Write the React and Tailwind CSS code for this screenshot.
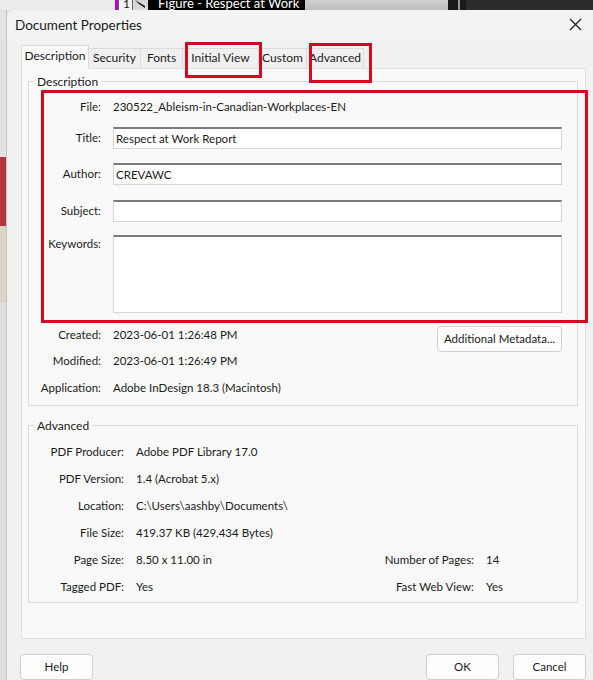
import React from 'react';

const FONT = { fontFamily: 'Lato, "Open Sans", "Liberation Sans", sans-serif' };

const TABS = [
  { label: 'Description', w: 'w-[68px]', active: true },
  { label: 'Security', w: 'w-[52px]' },
  { label: 'Fonts', w: 'w-[42px]' },
  { label: 'Initial View', w: 'w-[76px]' },
  { label: 'Custom', w: 'w-[48px]' },
  { label: 'Advanced', w: 'w-[57px]' },
];

const ADVANCED = [
  ['PDF Producer:', 'Adobe PDF Library 17.0'],
  ['PDF Version:', '1.4 (Acrobat 5.x)'],
  ['Location:', 'C:\\Users\\aashby\\Documents\\'],
  ['File Size:', '419.37 KB (429,434 Bytes)'],
  ['Page Size:', '8.50 x 11.00 in', 'Number of Pages:', '14'],
  ['Tagged PDF:', 'Yes', 'Fast Web View:', 'Yes'],
];

function Field({ value, tall }) {
  return (
    <div
      className={`bg-white border border-[#d6d6d6] border-t-2 border-t-[#7c7c7c] px-[2px] flex ${
        tall ? 'h-[78px] items-start' : 'h-[22px] items-center'
      }`}
    >
      {value}
    </div>
  );
}

function Btn({ children, className = '' }) {
  return (
    <button
      className={`h-[26px] rounded-[4px] bg-[#fdfdfd] border border-[#d0d0d0] text-[11.5px] text-[#1b1b1b] ${className}`}
    >
      {children}
    </button>
  );
}

export default function App() {
  return (
    <div className="w-[593px] h-[680px] overflow-hidden relative bg-[#e4e4e4] text-[#1b1b1b]" style={FONT}>
      {/* app behind the dialog */}
      <div className="flex h-[10px] overflow-hidden">
        <div className="w-[115px] bg-[#ececec]" />
        <div className="w-[3px] bg-[#c000c8]" />
        <div className="w-[15px] bg-[#f4f4f4] border-x border-[#666] text-[12px] leading-[8px] pl-[4px]">1</div>
        <div className="w-[15px] bg-[#d8d8d8] flex items-start">
          <svg width="12" height="8" viewBox="0 0 12 8">
            <path d="M2 0L12 6L12 8L6 4Z" fill="#111" />
          </svg>
        </div>
        <div className="w-[157px] bg-black text-white text-[13px] leading-[7px] pl-[10px] whitespace-nowrap">
          Figure - Respect at Work
        </div>
        <div className="w-[143px] bg-gradient-to-b from-[#d0d0d0] to-[#bdbdbd]" />
        <div className="w-[10px] bg-[#1a1a1a]" />
        <div className="w-[2px] bg-[#9a9a9a]" />
        <div className="w-[6px] bg-[#1a1a1a]" />
        <div className="flex-1 bg-[#2c2c2c]" />
      </div>

      <div className="flex h-[670px]">
        {/* left sliver of document */}
        <div className="w-[7px] flex flex-col border-r border-[#c4c4c4]">
          <div className="h-[147px] bg-[#e2e2e2]" />
          <div className="h-[69px] bg-[#b3363f]" />
          <div className="h-[77px] bg-[#dcd5c4]" />
          <div className="flex-1 bg-[#dedede]" />
        </div>

        {/* dialog */}
        <div className="flex-1 bg-[#f1f1f1] rounded-tl-[8px] flex flex-col">
          <div className="h-[30px] flex items-center justify-between pl-[8px] pr-[11px] bg-[#f3f3f3] rounded-tl-[8px]">
            <span className="text-[13.5px]">Document Properties</span>
            <svg width="13" height="13" viewBox="0 0 13 13">
              <path d="M1 1L12 12M12 1L1 12" stroke="#1b1b1b" strokeWidth="1.2" />
            </svg>
          </div>

          {/* tabs */}
          <div className="flex items-end h-[28px] pl-[14px]">
            {TABS.map((t) => (
              <div
                key={t.label}
                className={`${t.w} flex items-center justify-center text-[12px] border-[#dcdcdc] ${
                  t.active
                    ? 'h-[24px] pb-[2px] bg-[#f9f9f9] border-x border-t -mb-px relative z-10'
                    : 'h-[20px] pb-[1px] bg-[#f0f0f0] border-r border-t'
                }`}
              >
                {t.label}
              </div>
            ))}
          </div>

          {/* panel */}
          <div className="ml-[14px] mr-[7px] h-[573px] bg-[#f9f9f9] border border-[#dedede] px-[6px] pt-[5px] text-[11.5px]">
            <fieldset className="border border-[#dcdcdc] mr-[1px] pb-[6px]">
              <legend className="ml-[5px] px-[3px] text-[12px] leading-[16px]">Description</legend>
              <div className="grid grid-cols-[72px_1fr] gap-x-[12px] pr-[15px] pt-[6px] items-start">
                <div className="h-[22px] flex items-center justify-end">File:</div>
                <div className="h-[22px] flex items-center">230522_Ableism-in-Canadian-Workplaces-EN</div>

                <div className="mt-[9px] h-[22px] flex items-center justify-end">Title:</div>
                <div className="mt-[9px]"><Field value="Respect at Work Report" /></div>

                <div className="mt-[14px] h-[22px] flex items-center justify-end">Author:</div>
                <div className="mt-[14px]"><Field value="CREVAWC" /></div>

                <div className="mt-[15px] h-[22px] flex items-center justify-end">Subject:</div>
                <div className="mt-[15px]"><Field value="" /></div>

                <div className="mt-[13px] flex justify-end">Keywords:</div>
                <div className="mt-[13px]"><Field value="" tall /></div>
              </div>

              <div className="flex pr-[15px] mt-[11px]">
                <div className="grid grid-cols-[72px_1fr] gap-x-[12px] flex-1">
                  <div className="h-[22px] flex items-center justify-end">Created:</div>
                  <div className="h-[22px] flex items-center">2023-06-01 1:26:48 PM</div>
                  <div className="mt-[4px] h-[22px] flex items-center justify-end">Modified:</div>
                  <div className="mt-[4px] h-[22px] flex items-center">2023-06-01 1:26:49 PM</div>
                  <div className="mt-[5px] h-[22px] flex items-center justify-end">Application:</div>
                  <div className="mt-[5px] h-[22px] flex items-center">Adobe InDesign 18.3 (Macintosh)</div>
                </div>
                <div className="pt-[2px]">
                  <Btn className="w-[125px] h-[23px]">Additional Metadata...</Btn>
                </div>
              </div>
            </fieldset>

            <fieldset className="border border-[#dcdcdc] mr-[1px] mt-[12px] pb-[2px]">
              <legend className="ml-[5px] px-[3px] text-[12px] leading-[16px]">Advanced</legend>
              <div className="grid grid-cols-[95px_216px_110px_1fr] gap-x-[12px] pt-[4px]">
                {ADVANCED.map((r) => (
                  <React.Fragment key={r[0]}>
                    <div className="h-[27px] flex items-center justify-end">{r[0]}</div>
                    <div className="h-[27px] flex items-center">{r[1]}</div>
                    <div className="h-[27px] flex items-center justify-end">{r[2] || ''}</div>
                    <div className="h-[27px] flex items-center">{r[3] || ''}</div>
                  </React.Fragment>
                ))}
              </div>
            </fieldset>
          </div>

          {/* footer buttons */}
          <div className="flex pl-[13px] pr-[7px] pt-[15px]">
            <Btn className="w-[73px]">Help</Btn>
            <div className="flex-1" />
            <Btn className="w-[73px] border-[#0067c0]">OK</Btn>
            <Btn className="w-[73px] ml-[14px]">Cancel</Btn>
          </div>
        </div>
      </div>

      {/* red annotation boxes */}
      <div className="absolute left-[185px] top-[42px] w-[77px] h-[36px] border-[3px] border-[#d20a24]" />
      <div className="absolute left-[309px] top-[43px] w-[63px] h-[40px] border-[3px] border-[#d20a24]" />
      <div className="absolute left-[41px] top-[90px] w-[547px] h-[233px] border-[3px] border-[#d20a24]" />
    </div>
  );
}
